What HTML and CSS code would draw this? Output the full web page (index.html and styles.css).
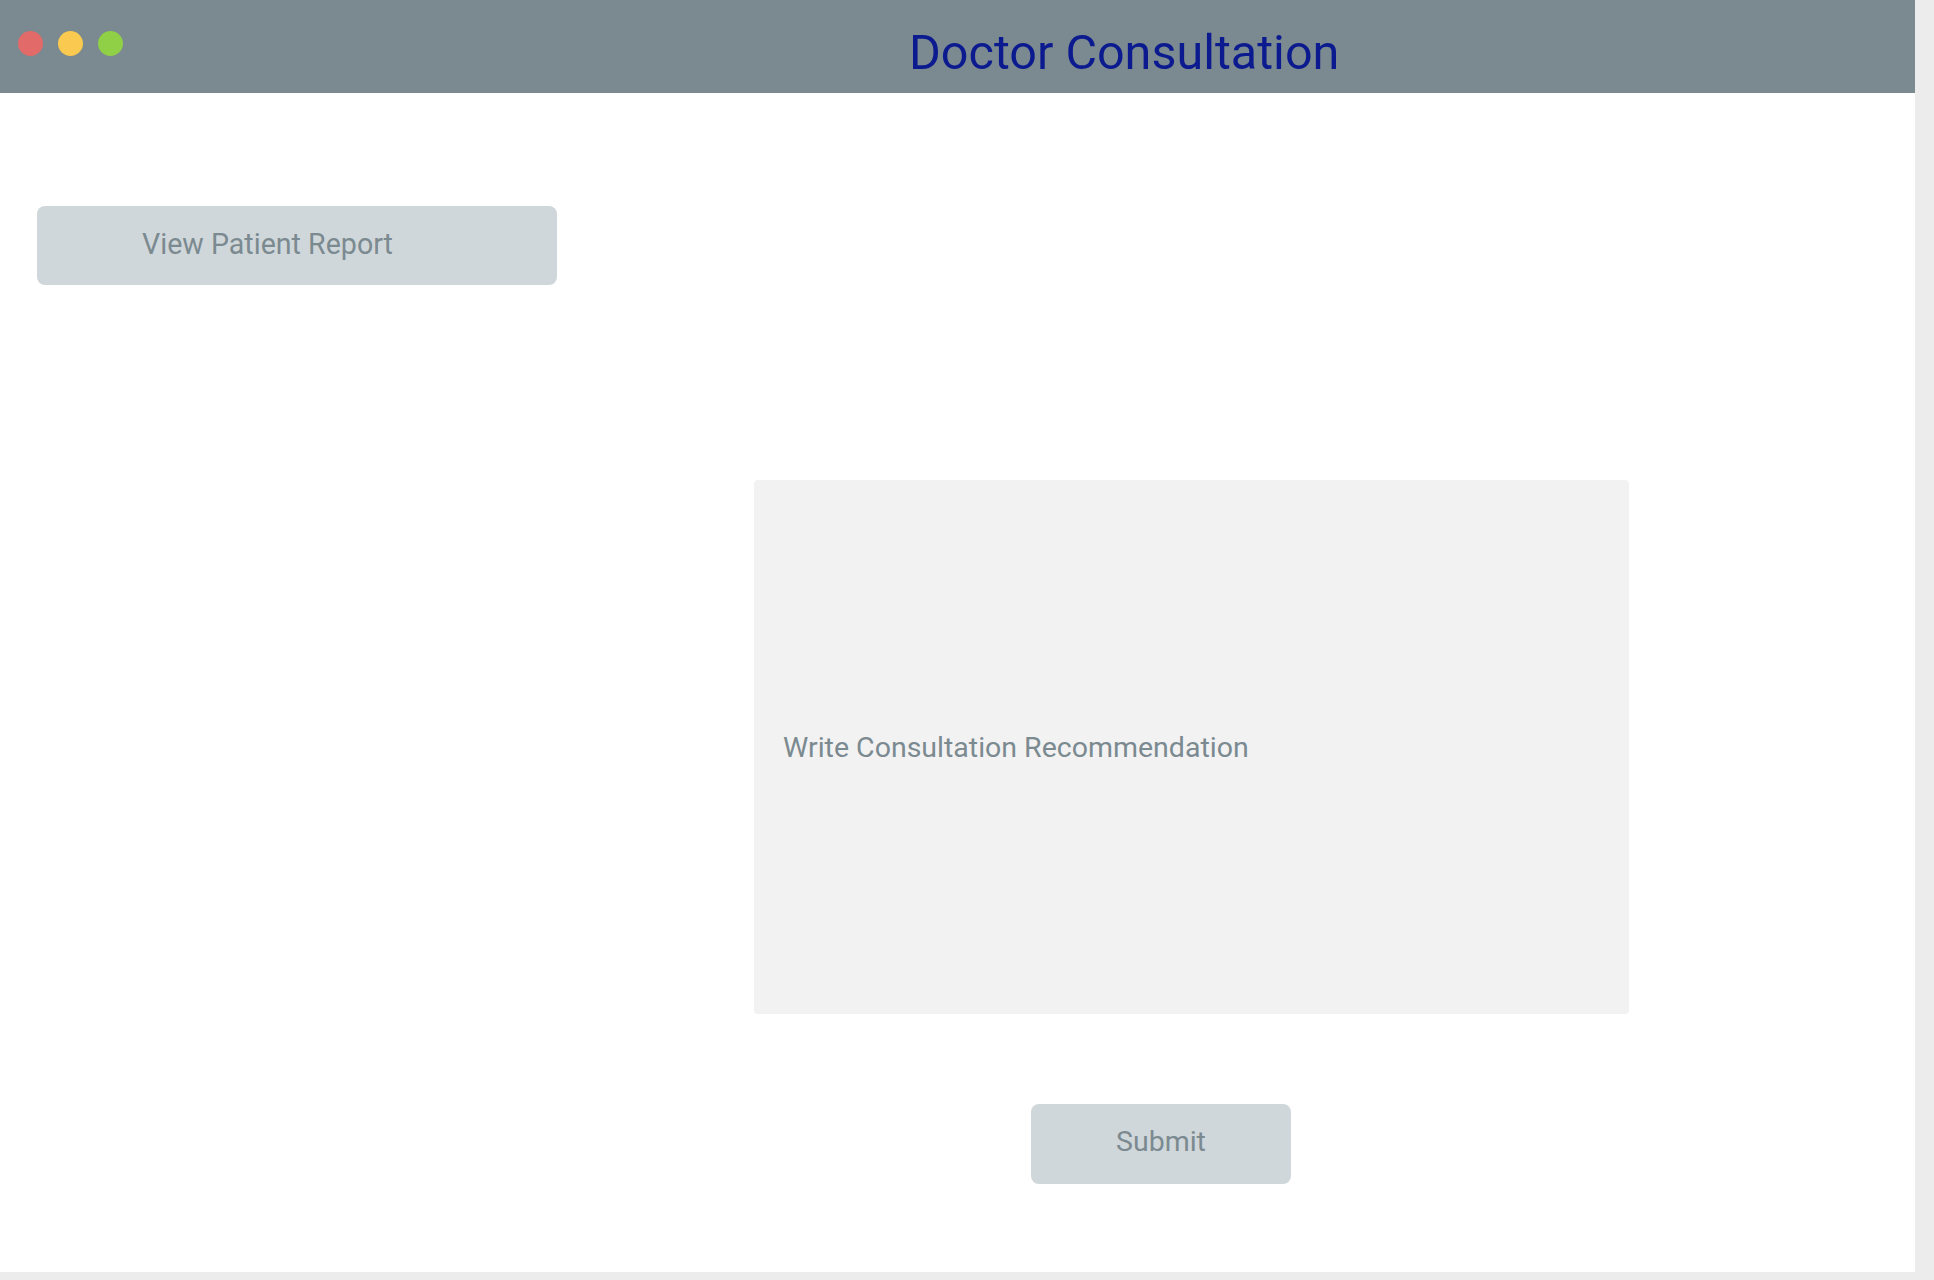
FILE: index.html
```html
<!DOCTYPE html>
<html lang="en">
<head>
<meta charset="utf-8">
<title>Doctor Consultation</title>
<link rel="stylesheet" href="styles.css">
</head>
<body>
<div class="window">
  <header class="titlebar">
    <div class="lights">
      <span class="light red"></span>
      <span class="light yellow"></span>
      <span class="light green"></span>
    </div>
    <h1 class="title">Doctor Consultation</h1>
  </header>
  <main class="content">
    <button class="btn report-btn">View Patient Report</button>
    <div class="recommendation">
      <span class="placeholder">Write Consultation Recommendation</span>
    </div>
    <button class="btn submit-btn">Submit</button>
  </main>
</div>
</body>
</html>
```
FILE: styles.css
```css
html, body {
  margin: 0;
  padding: 0;
  background: #ececec;
  font-family: Roboto, "Noto Sans", sans-serif;
}
.window {
  width: 1915px;
  height: 1272px;
  background: #ffffff;
  display: flex;
  flex-direction: column;
}
.titlebar {
  height: 93px;
  background: #7b8a90;
  display: flex;
  align-items: center;
  padding-left: 18px;
  box-sizing: border-box;
}
.lights {
  display: flex;
  gap: 15px;
  margin-top: -6px;
}
.light {
  width: 25px;
  height: 25px;
  border-radius: 50%;
  display: block;
}
.red { background: #e26a68; }
.yellow { background: #f9ca4f; }
.green { background: #8fd046; }
.title {
  margin: 0 0 0 786px;
  padding-top: 14px;
  font-size: 48.5px;
  font-weight: 400;
  color: #0b1a8e;
  line-height: 1;
}
.content {
  display: flex;
  flex-direction: column;
  align-items: flex-start;
}
.btn {
  border: none;
  background: #d0d7da;
  color: #7b8a90;
  font-family: Roboto, "Noto Sans", sans-serif;
  font-weight: 400;
  border-radius: 8px;
  padding: 0;
  cursor: pointer;
}
.report-btn {
  margin: 113px 0 0 37px;
  width: 520px;
  height: 79px;
  font-size: 28.6px;
  text-align: left;
  padding-left: 105px;
  padding-bottom: 3px;
}
.recommendation {
  margin: 195px 0 0 754px;
  width: 875px;
  height: 534px;
  background: #f2f2f2;
  border-radius: 4px;
  display: flex;
  align-items: center;
  padding-left: 29px;
  box-sizing: border-box;
}
.placeholder {
  color: #7b8a90;
  font-size: 28.5px;
}
.submit-btn {
  margin: 90px 0 0 1031px;
  width: 260px;
  height: 80px;
  font-size: 28.5px;
  text-align: center;
  padding-bottom: 5px;
}
```
